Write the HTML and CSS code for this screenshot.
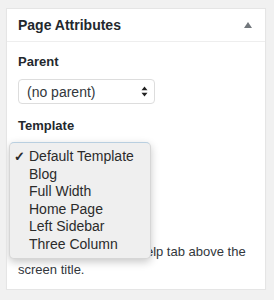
FILE: index.html
```html
<!doctype html>
<html lang="en">
<head>
  <meta charset="utf-8">
  <title>Page Attributes</title>
  <link rel="stylesheet" href="styles.css">
</head>
<body>

  <div class="postbox">
    <div class="postbox-header">
      <h2>Page Attributes</h2>
      <span class="toggle-arrow"></span>
    </div>

    <div class="inside">
      <p class="field-label">Parent</p>
      <div class="fake-select">
        <span>(no parent)</span>
        <svg class="updown" width="7" height="11" viewBox="0 0 7 11">
          <path d="M3.5 0.5 L6.5 4.2 L0.5 4.2 Z M0.5 6.8 L6.5 6.8 L3.5 10.5 Z" fill="#222"/>
        </svg>
      </div>

      <p class="field-label">Template</p>
      <div class="template-wrap">
        <div class="fake-select template-select">
          <span>Default Template</span>
        </div>

        <ul class="popup-menu">
          <li class="checked">Default Template</li>
          <li>Blog</li>
          <li>Full Width</li>
          <li>Home Page</li>
          <li>Left Sidebar</li>
          <li>Three Column</li>
        </ul>
      </div>

      <p class="field-label">Order</p>
      <div class="order-input">0</div>

      <p class="help">Need help? Use the Help tab above the screen title.</p>
    </div>
  </div>

</body>
</html>
```

FILE: styles.css
```css
body {
  margin: 0;
  background: #f1f1f1;
  font-family: "Liberation Sans", Arial, sans-serif;
  color: #32373c;
}
.postbox {
  box-sizing: border-box;
  width: 260px;
  height: 282px;
  margin: 8px 0 0 6px;
  background: #fff;
  border: 1px solid #e5e5e5;
  box-shadow: 0 1px 1px rgba(0,0,0,0.04);
  overflow: hidden;
}
.postbox-header {
  display: flex;
  align-items: center;
  justify-content: space-between;
  height: 32px;
  padding: 0 13px 0 11px;
  border-bottom: 1px solid #eee;
}
.postbox-header h2 {
  margin: 0;
  font-size: 14px;
  font-weight: bold;
  color: #23282d;
}
.toggle-arrow {
  width: 0;
  height: 0;
  border-left: 4px solid transparent;
  border-right: 4px solid transparent;
  border-bottom: 6px solid #72777c;
  margin-top: -1px;
}
.inside {
  padding: 11px 11px 11px 11px;
}
.field-label {
  margin: 0 0 8px;
  font-size: 13px;
  font-weight: bold;
  line-height: 18px;
  color: #23282d;
}
.fake-select {
  box-sizing: border-box;
  display: flex;
  align-items: center;
  justify-content: space-between;
  width: 137px;
  height: 25px;
  padding: 0 6px 0 8px;
  margin-bottom: 13px;
  border: 1px solid #ddd;
  border-radius: 4px;
  font-size: 14px;
  color: #32373c;
}
.template-select {
  width: 128px;
}
.template-wrap {
  position: relative;
}
.popup-menu {
  position: absolute;
  top: -1px;
  left: -9px;
  width: 142px;
  margin: 0;
  padding: 5px 0 4px;
  list-style: none;
  box-sizing: border-box;
  background: #efefef;
  border: 1px solid #d6d6d6;
  border-top-color: #b9cfe0;
  border-radius: 5px;
  box-shadow: 0 3px 8px rgba(0,0,0,0.22);
}
.popup-menu li {
  position: relative;
  padding-left: 19px;
  line-height: 17.6px;
  font-size: 14px;
  color: #2b2b2b;
}
.popup-menu li.checked::before {
  content: "\2713";
  position: absolute;
  left: 4px;
  font-size: 13px;
  font-weight: bold;
}
.order-input {
  box-sizing: border-box;
  width: 60px;
  height: 25px;
  margin-bottom: 11px;
  border: 1px solid #ddd;
  font-size: 13px;
}
.help {
  margin: 0;
  font-size: 13px;
  line-height: 18px;
  color: #32373c;
}
```
